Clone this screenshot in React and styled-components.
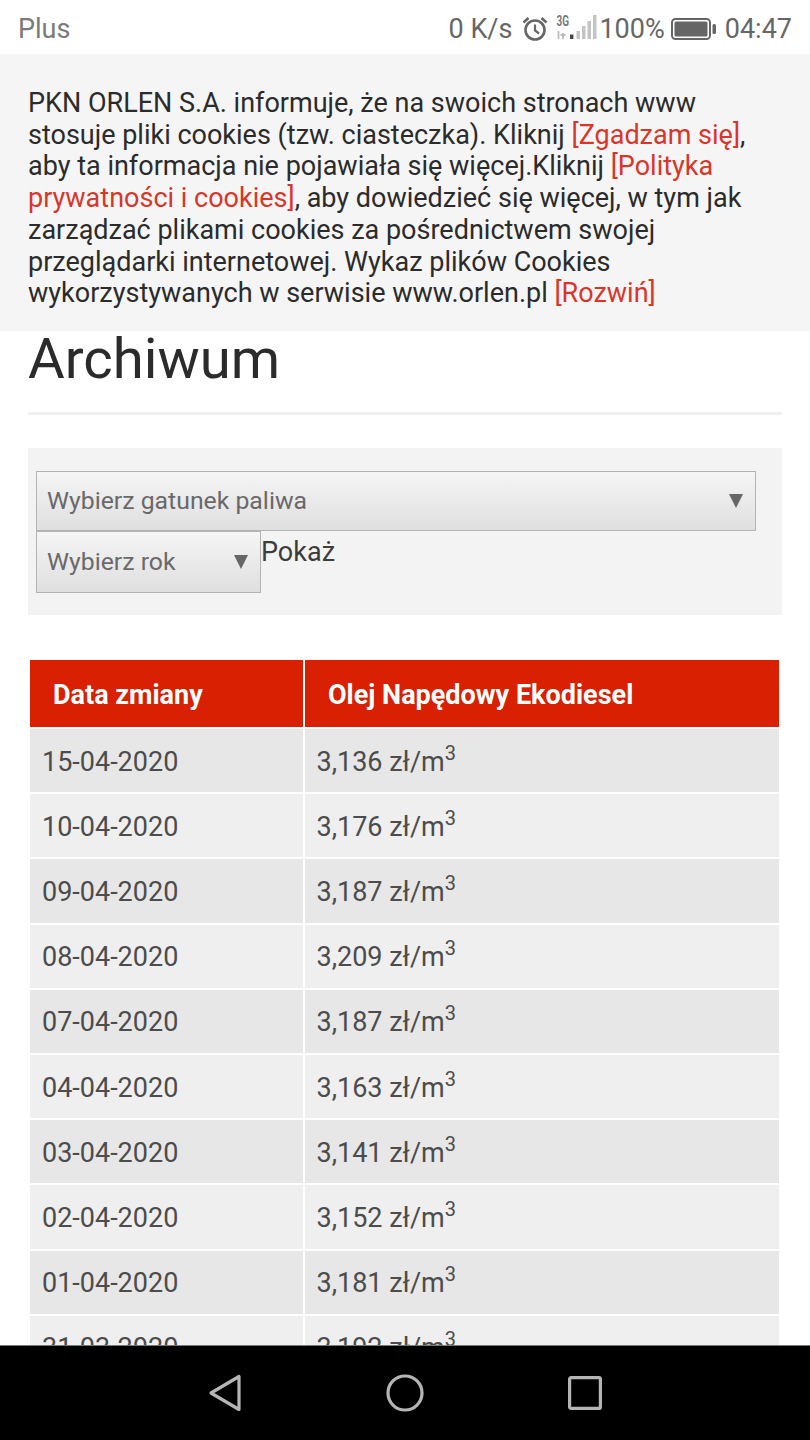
import React from "react";
import styled, { createGlobalStyle } from "styled-components";

const Global = createGlobalStyle`
  html, body { margin: 0; padding: 0; background: #fff; }
  body { font-family: Roboto, "Liberation Sans", sans-serif; }
`;
const Screen = styled.div`
  width: 810px; height: 1440px; display: flex; flex-direction: column; overflow: hidden; background: #fff;
`;
const StatusBar = styled.div`
  height: 54px; flex: none; display: flex; align-items: center; padding: 3px 18px 0 18px; box-sizing: border-box;
  background: #fff; color: #666; font-size: 27px;
`;
const Carrier = styled.span`flex: 1; color: #7a7a7a; font-size: 27px;`;
const StatusItems = styled.div`display: flex; align-items: center; color: #666;`;
const StatusText = styled.span`margin-left: ${p => p.$ml || 0}px;`;
const Cookie = styled.div`
  flex: none; height: 277px; box-sizing: border-box; padding: 34px 28px 0; background: #f5f5f5;
  font-size: 27px; line-height: 31.7px; color: #2b2b2b;
`;
const CookieLink = styled.span`color: #d9352a;`;
const Content = styled.div`flex: 1; min-height: 0; overflow: hidden; padding: 0 28px 0 28px;`;
const Title = styled.h1`
  margin: 0; font-weight: 400; font-size: 56.3px; line-height: 56px; color: #2b2b2b; height: 84px; box-sizing: border-box; border-bottom: 3px solid #f0f0f0;
`;
const Filter = styled.div`
  margin-top: 33px; height: 167px; box-sizing: border-box; background: #f3f3f3; padding: 23px 25px 0 8px;
`;
const Select = styled.div`
  box-sizing: border-box; display: flex; align-items: center; justify-content: space-between;
  width: ${p => p.$w}; height: ${p => p.$h}px; padding: 0 12px 1px 10px;
  border: 1px solid #b3b3b3; background: linear-gradient(#f5f5f5, #dfdfdf);
  font-size: 24.8px; color: #696969;
`;
const YearRow = styled.div`display: flex; align-items: flex-start;`;
const Show = styled.span`font-size: 27px; line-height: 32px; color: #3c3c3c; margin-top: 5px;`;
const Caret = styled.span`
  width: 0; height: 0; border-left: 7px solid transparent; border-right: 7px solid transparent; border-top: 14px solid #666;
`;
const Table = styled.table`
  margin-top: 43px; width: 753px; border-collapse: separate; border-spacing: 2px; table-layout: fixed;
`;
const Head = styled.th`
  background: #d92002; color: #fff; height: 67px; padding: 3px 0 0 23px; box-sizing: border-box; text-align: left; font-size: 27px; font-weight: 700;
  width: ${p => p.$w || "auto"};
`;
const Cell = styled.td`
  background: ${p => (p.$odd ? "#e7e7e7" : "#efefef")}; height: 63.2px; box-sizing: border-box; padding: 2px 0 0 ${p => p.$pad}px; font-size: 27px; color: #4c4c4c;
  line-height: 32px;
`;
const Sup = styled.sup`font-size: 20px; line-height: 0; vertical-align: 11px;`;
const NavBar = styled.div`
  flex: none; height: 95px; box-sizing: border-box; background: #000; border-top: 1px solid #777;
  display: grid; grid-template-columns: repeat(3, 180px); justify-content: center; justify-items: center; align-items: center;
`;

const rows = [
  ["15-04-2020", "3,136"], ["10-04-2020", "3,176"], ["09-04-2020", "3,187"], ["08-04-2020", "3,209"],
  ["07-04-2020", "3,187"], ["04-04-2020", "3,163"], ["03-04-2020", "3,141"], ["02-04-2020", "3,152"],
  ["01-04-2020", "3,181"], ["31-03-2020", "3,192"],
];

const Alarm = () => (
  <svg width="28" height="28" viewBox="0 0 28 28" fill="none" stroke="#666" strokeWidth="2.6" style={{ marginLeft: 9 }}>
    <circle cx="14" cy="15" r="9.5" />
    <path d="M14 9.5V15.5L18 18.5" strokeWidth="2.2" />
    <path d="M2.5 7.5L7.5 3M25.5 7.5L20.5 3" />
  </svg>
);
const Signal = () => (
  <svg width="43" height="30" viewBox="0 0 43 30" style={{ marginLeft: 7 }}>
    <text x="0.5" y="12" fontSize="14" fontWeight="700" fontFamily="Roboto, sans-serif" fill="#777" textLength="12.5" lengthAdjust="spacingAndGlyphs">3G</text>
    <path d="M2.5 17v8M7 19v6M4.5 21h5" stroke="#bbb" strokeWidth="1.8" fill="none" />
    <rect x="14" y="20.5" width="3.4" height="4.5" fill="#444" />
    <rect x="20.5" y="17" width="3.5" height="8" fill="#c4c4c4" />
    <rect x="26" y="12" width="3.5" height="13" fill="#c4c4c4" />
    <rect x="31.5" y="7" width="3.5" height="18" fill="#c4c4c4" />
    <rect x="37" y="1" width="3.5" height="24" fill="#c4c4c4" />
  </svg>
);
const Battery = () => (
  <svg width="46" height="22" viewBox="0 0 46 22" style={{ marginLeft: 6 }}>
    <rect x="1" y="1" width="38" height="20" rx="3.5" fill="none" stroke="#666" strokeWidth="2" />
    <rect x="3.5" y="3.5" width="33" height="15" rx="1.5" fill="#666" />
    <rect x="41.5" y="6" width="3.5" height="10" rx="1.5" fill="#666" />
  </svg>
);

export default function App() {
  return (
    <Screen>
      <Global />
      <StatusBar>
        <Carrier>Plus</Carrier>
        <StatusItems>
          <StatusText>0 K/s</StatusText>
          <Alarm />
          <Signal />
          <StatusText>100%</StatusText>
          <Battery />
          <StatusText $ml={8}>04:47</StatusText>
        </StatusItems>
      </StatusBar>
      <Cookie>
        PKN ORLEN S.A. informuje, że na swoich stronach www<br />
        stosuje pliki cookies (tzw. ciasteczka). Kliknij <CookieLink>[Zgadzam się]</CookieLink>,<br />
        aby ta informacja nie pojawiała się więcej.Kliknij <CookieLink>[Polityka</CookieLink><br />
        <CookieLink>prywatności i cookies]</CookieLink>, aby dowiedzieć się więcej, w tym jak<br />
        zarządzać plikami cookies za pośrednictwem swojej<br />
        przeglądarki internetowej. Wykaz plików Cookies<br />
        wykorzystywanych w serwisie www.orlen.pl <CookieLink>[Rozwiń]</CookieLink>
      </Cookie>
      <Content>
        <Title>Archiwum</Title>
        <Filter>
          <Select $w="720px" $h={60}>Wybierz gatunek paliwa<Caret /></Select>
          <YearRow>
            <Select $w="225px" $h={62}>Wybierz rok<Caret /></Select>
            <Show>Pokaż</Show>
          </YearRow>
        </Filter>
        <Table>
          <thead>
            <tr>
              <Head $w="273px">Data zmiany</Head>
              <Head>Olej Napędowy Ekodiesel</Head>
            </tr>
          </thead>
          <tbody>
            {rows.map((r, i) => (
              <tr key={r[0]}>
                <Cell $odd={i % 2 === 0} $pad={12}>{r[0]}</Cell>
                <Cell $odd={i % 2 === 0} $pad={11.5}>{r[1]} zł/m<Sup>3</Sup></Cell>
              </tr>
            ))}
          </tbody>
        </Table>
      </Content>
      <NavBar>
        <svg width="36" height="40" viewBox="0 0 36 40" fill="none" stroke="#b5b5b5" strokeWidth="3.2" strokeLinejoin="round">
          <path d="M32 3.5V36.5L4 20Z" />
        </svg>
        <svg width="38" height="38" viewBox="0 0 38 38" fill="none" stroke="#b5b5b5" strokeWidth="3.2">
          <circle cx="19" cy="19" r="17" />
        </svg>
        <svg width="34" height="34" viewBox="0 0 34 34" fill="none" stroke="#b5b5b5" strokeWidth="3.2" strokeLinejoin="round">
          <rect x="1.6" y="1.6" width="30.8" height="30.8" rx="1.5" />
        </svg>
      </NavBar>
    </Screen>
  );
}
